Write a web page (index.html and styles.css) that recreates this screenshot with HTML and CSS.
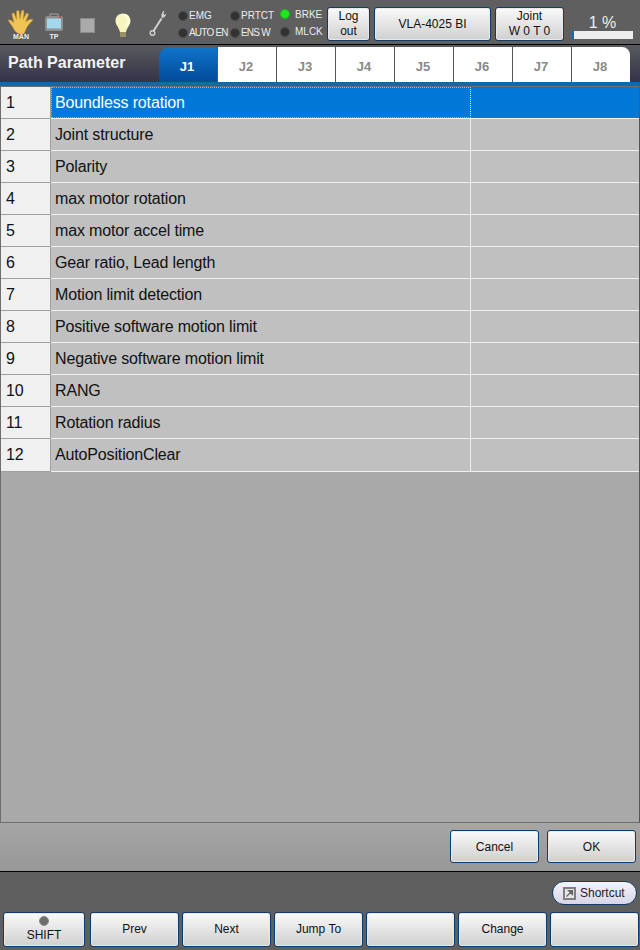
FILE: index.html
```html
<!DOCTYPE html>
<html lang="en">
<head>
    <meta charset="UTF-8">
    <meta name="viewport" content="width=device-width, initial-scale=1.0">
    <title>Path Parameter</title>
    <link rel="stylesheet" href="styles.css">
</head>
<body>

    <div class="screen">

        <!-- Status bar -->
        <div class="status-bar">
            <div class="icon-box icon-man">
                <svg width="28" height="25" viewBox="0 0 28 25">
                    <path d="M12 25 C8 23 7 20 5 17 C4 15 1 12 1.500 11 C3 10 6 13 7 14 L5 5.500 C5 3.500 7 3.500 7.500 5 L9.500 10.500 L9.500 3 C9.500 1 12 1 12.200 3 L13 10 L14.500 2 C15 0.500 17.300 1 17 3 L16 10.500 L19 5 C20 3.500 22 4.500 21.300 6 L18.500 13 C20 12 24 9 26 11 C24 13 21 16 19.500 19 C18.500 21 17.500 24 17 25 Z" fill="#f0c555" stroke="#c2922e" stroke-width="0.6"/>
                </svg>
                <span class="icon-label">MAN</span>
            </div>
            <div class="icon-box icon-tp">
                <svg width="20" height="19" viewBox="0 0 20 19">
                    <path d="M6 3 V1 H14 V3" fill="none" stroke="#8d8d8d" stroke-width="1.500"/>
                    <rect x="1" y="3" width="18" height="15" rx="2.500" fill="#8f8f8f"/>
                    <rect x="3" y="5.500" width="14" height="10" fill="#a3d8ec"/>
                    <rect x="15" y="3.500" width="2" height="1.500" fill="#c8393a"/>
                </svg>
                <span class="icon-label">TP</span>
            </div>
            <div class="icon-stop"></div>
            <div class="icon-bulb">
                <svg width="16" height="25" viewBox="0 0 16 25">
                    <path d="M8 0.500 C3.500 0.500 0.500 3.500 0.500 8 C0.500 12 4 14.500 5 19 H11 C12 14.500 15.500 12 15.500 8 C15.500 3.500 12.500 0.500 8 0.500 Z" fill="#f8f4c0"/>
                    <path d="M8 2 C11 2 13.500 4.500 13.500 8 C13.500 10 12 12 11 14" fill="none" stroke="#fffde8" stroke-width="2"/>
                    <rect x="5" y="19" width="6" height="5" fill="#9a9068"/>
                </svg>
            </div>
            <div class="icon-wrench">
                <svg width="18" height="27" viewBox="0 0 18 27">
                    <path d="M4.500 21 L12.500 8.500" fill="none" stroke="#d0d0d0" stroke-width="2"/>
                    <path d="M15.500 0.500 C13 1.500 12 4 12.500 8 C15 8 16.500 6.500 17.500 3.500 L15.500 5 L14.500 3.500 Z" fill="#d0d0d0"/>
                    <circle cx="3.500" cy="23" r="2.300" fill="none" stroke="#d0d0d0" stroke-width="1.400"/>
                </svg>
            </div>

            <div class="led-grid">
                <div class="led-item"><i class="led"></i>EMG</div>
                <div class="led-item"><i class="led"></i>PRTCT</div>
                <div class="led-item led-top"><i class="led led-on"></i>BRKE</div>
                <div class="led-item led-tight"><i class="led"></i>AUTO EN</div>
                <div class="led-item led-tight"><i class="led"></i>ENS W</div>
                <div class="led-item led-low"><i class="led"></i>MLCK</div>
            </div>

            <button class="btn btn-logout">Log<br>out</button>
            <button class="btn btn-model">VLA-4025 BI</button>
            <button class="btn btn-joint">Joint<br>W 0 T 0</button>

            <div class="speed">
                <div class="speed-text">1 %</div>
                <div class="speed-bar"><div class="speed-fill" style="width: 1%"></div></div>
            </div>
        </div>

        <!-- Title and tabs -->
        <div class="title-bar">
            <div class="title">Path Parameter</div>
            <div class="tabs">
                <div class="tab tab-active">J1</div>
                <div class="tab">J2</div>
                <div class="tab">J3</div>
                <div class="tab">J4</div>
                <div class="tab">J5</div>
                <div class="tab">J6</div>
                <div class="tab">J7</div>
                <div class="tab tab-last">J8</div>
            </div>
        </div>
        <div class="blue-strip"></div>

        <!-- Parameter list -->
        <div class="grid-panel">
            <div class="row row-selected">
                <div class="cell-num">1</div>
                <div class="cell-name">Boundless rotation</div>
                <div class="cell-value"></div>
            </div>
            <div class="row">
                <div class="cell-num">2</div>
                <div class="cell-name">Joint structure</div>
                <div class="cell-value"></div>
            </div>
            <div class="row">
                <div class="cell-num">3</div>
                <div class="cell-name">Polarity</div>
                <div class="cell-value"></div>
            </div>
            <div class="row">
                <div class="cell-num">4</div>
                <div class="cell-name">max motor rotation</div>
                <div class="cell-value"></div>
            </div>
            <div class="row">
                <div class="cell-num">5</div>
                <div class="cell-name">max motor accel time</div>
                <div class="cell-value"></div>
            </div>
            <div class="row">
                <div class="cell-num">6</div>
                <div class="cell-name">Gear ratio, Lead length</div>
                <div class="cell-value"></div>
            </div>
            <div class="row">
                <div class="cell-num">7</div>
                <div class="cell-name">Motion limit detection</div>
                <div class="cell-value"></div>
            </div>
            <div class="row">
                <div class="cell-num">8</div>
                <div class="cell-name">Positive software motion limit</div>
                <div class="cell-value"></div>
            </div>
            <div class="row">
                <div class="cell-num">9</div>
                <div class="cell-name">Negative software motion limit</div>
                <div class="cell-value"></div>
            </div>
            <div class="row">
                <div class="cell-num">10</div>
                <div class="cell-name">RANG</div>
                <div class="cell-value"></div>
            </div>
            <div class="row">
                <div class="cell-num">11</div>
                <div class="cell-name">Rotation radius</div>
                <div class="cell-value"></div>
            </div>
            <div class="row">
                <div class="cell-num">12</div>
                <div class="cell-name">AutoPositionClear</div>
                <div class="cell-value"></div>
            </div>
        </div>

        <!-- Dialog buttons -->
        <div class="dialog-bar">
            <button class="btn btn-dialog">Cancel</button>
            <button class="btn btn-dialog">OK</button>
        </div>

        <!-- Function keys -->
        <div class="bottom-bar">
            <div class="shortcut-row">
                <div class="shortcut">
                    <svg class="shortcut-icon" width="13" height="13" viewBox="0 0 13 13">
                        <rect x="1" y="1" width="11" height="11" fill="#e6e6e6" stroke="#7f7f7f" stroke-width="2"/>
                        <path d="M3.500 9.500 L8 5 M5.500 3.500 H9.500 V7.500 Z" stroke="#666" stroke-width="1.200" fill="#666"/>
                    </svg>
                    Shortcut
                </div>
            </div>
            <div class="fkeys">
                <button class="btn fkey fkey-shift"><i class="shift-led"></i>SHIFT</button>
                <button class="btn fkey">Prev</button>
                <button class="btn fkey">Next</button>
                <button class="btn fkey">Jump To</button>
                <button class="btn fkey"></button>
                <button class="btn fkey">Change</button>
                <button class="btn fkey"></button>
            </div>
        </div>

    </div>

</body>
</html>
```

FILE: styles.css
```css
* {
    box-sizing: border-box;
}

html, body {
    margin: 0;
    height: 100%;
}

body {
    font-family: "Liberation Sans", Arial, sans-serif;
    background-color: #5f5f5f;
}

.screen {
    width: 640px;
    height: 950px;
    display: flex;
    flex-direction: column;
    overflow: hidden;
}

/* Status bar */
.status-bar {
    height: 45px;
    flex: none;
    display: flex;
    align-items: flex-start;
    background-color: #5f5f5f;
    border-bottom: 1px solid #000;
}

.icon-box {
    display: flex;
    flex-direction: column;
    align-items: center;
}

.icon-man {
    width: 28px;
    margin: 9px 0 0 7px;
}

.icon-man svg {
    margin-bottom: -1px;
}

.icon-tp {
    width: 20px;
    margin: 13px 0 0 9px;
}

.icon-label {
    font-size: 7px;
    font-weight: bold;
    line-height: 8px;
    color: #f0f0f0;
}

.icon-tp .icon-label {
    margin-top: 1px;
}

.icon-stop {
    width: 15px;
    height: 15px;
    margin: 18px 0 0 16px;
    background-color: #aaa;
    border: 1px solid #8b8b8b;
}

.icon-bulb {
    margin: 13px 0 0 20px;
    height: 25px;
}

.icon-wrench {
    margin: 10px 0 0 18px;
    height: 27px;
}

.led-grid {
    width: 146px;
    margin: 7px 0 0 11px;
    display: grid;
    grid-template-columns: 52px 50px 44px;
    grid-auto-rows: 17px;
}

.led-item {
    display: flex;
    align-items: center;
    gap: 1px;
    font-size: 10px;
    color: #ececec;
    white-space: nowrap;
}

.led-tight {
    letter-spacing: -0.8px;
}

.led-top {
    margin-top: -3px;
    gap: 5px;
}

.led-low {
    margin-top: -2px;
    gap: 5px;
}

.led {
    width: 10px;
    height: 10px;
    flex: none;
    border-radius: 50%;
    background-color: #333;
    border: 1px solid #4a4a4a;
}

.led-on {
    background-color: #1fe61f;
    border-color: #0ec00e;
}

/* Buttons */
.btn {
    padding: 0;
    font-family: "Liberation Sans", Arial, sans-serif;
    font-size: 12px;
    line-height: 15px;
    color: #111;
    background: linear-gradient(#fafafa, #cfcfcf);
    border: 1px solid #0f3c68;
    border-radius: 3px;
    box-shadow: inset 0 0 0 1px #e8e8e8;
}

.btn-logout {
    width: 43px;
    height: 34px;
    margin: 7px 0 0 3px;
}

.btn-model {
    width: 117px;
    height: 34px;
    margin: 7px 0 0 4px;
}

.btn-joint {
    width: 69px;
    height: 34px;
    margin: 7px 0 0 4px;
}

.speed {
    width: 61px;
    margin: 14px 0 0 8px;
}

.speed-text {
    font-size: 16px;
    line-height: 17px;
    text-align: center;
    color: #eee;
}

.speed-bar {
    height: 8px;
    background-color: #eee;
}

.speed-fill {
    height: 100%;
    min-width: 2px;
    background-color: #0f6db8;
}

/* Title and tabs */
.title-bar {
    height: 37px;
    flex: none;
    display: flex;
    background: linear-gradient(#5a5a5e, #33334a);
    padding-top: 2px;
}

.title {
    width: 159px;
    padding: 7px 0 0 8px;
    font-size: 16px;
    font-weight: bold;
    color: #f4f4f4;
}

.tabs {
    display: flex;
}

.tab {
    width: 59px;
    display: flex;
    align-items: center;
    justify-content: center;
    padding: 3px 2px 0 0;
    font-size: 13px;
    font-weight: bold;
    color: #8a8a8a;
    background-color: #fff;
    border-left: 1px solid #555;
}

.tab-active {
    width: 58px;
    color: #fff;
    background: linear-gradient(#0f74c9, #024a9a);
    border-left: none;
    border-top-left-radius: 10px;
}

.tab-last {
    border-top-right-radius: 8px;
}

.blue-strip {
    height: 4px;
    flex: none;
    background-color: #0f69ab;
}

/* Parameter list */
.grid-panel {
    height: 737px;
    flex: none;
    background-color: #a9a9a9;
    border: 1px solid #6e6e6e;
    border-right-color: #555;
}

.row {
    height: 32px;
    display: flex;
    font-size: 16px;
    letter-spacing: -0.15px;
    color: #111;
    background-color: #c0c0c0;
    border-bottom: 1px solid #f0f0f0;
}

.row:last-child {
    height: 33px;
}

.cell-num {
    width: 50px;
    flex: none;
    display: flex;
    align-items: center;
    padding-left: 5px;
    background-color: #f0f0f0;
    border-right: 1px solid #a0a0a0;
    border-bottom: 1px solid #a0a0a0;
    margin-bottom: -1px;
}

.cell-name {
    width: 420px;
    flex: none;
    display: flex;
    align-items: center;
    padding-left: 4px;
    border-right: 1px solid #f0f0f0;
}

.cell-value {
    flex: 1;
}

.row-selected {
    color: #fff;
    background-color: #0078d7;
}

.row-selected .cell-num {
    color: #111;
}

.row-selected .cell-name {
    border: 1px dotted #f0a050;
    border-right-color: #f4f4f4;
    padding-left: 3px;
}

/* Dialog buttons */
.dialog-bar {
    height: 49px;
    flex: none;
    display: flex;
    justify-content: flex-end;
    align-items: flex-start;
    gap: 8px;
    padding: 7px 4px 0 0;
    background: linear-gradient(#a6a6a6, #979797);
    border-bottom: 1px solid #000;
}

.btn-dialog {
    width: 89px;
    height: 33px;
    padding-top: 1px;
}

/* Function keys */
.bottom-bar {
    flex: 1;
    background-color: #5f5f5f;
}

.shortcut-row {
    display: flex;
    justify-content: flex-end;
    padding: 9px 3px 0 0;
}

.shortcut {
    width: 85px;
    height: 24px;
    display: flex;
    align-items: center;
    gap: 4px;
    padding-left: 10px;
    font-size: 12px;
    font-weight: 500;
    color: #222;
    background: linear-gradient(#f4f4fa, #d8d4e6);
    border: 1px solid #0f3c68;
    border-radius: 12px;
}

.shortcut-icon {
    flex: none;
}

.fkeys {
    display: flex;
    gap: 3px;
    margin: 7px 0 0 3px;
}

.fkey {
    width: 89px;
    height: 35px;
    padding-bottom: 1px;
}

.fkey-shift {
    width: 82px;
    margin-right: 2px;
    display: flex;
    flex-direction: column;
    align-items: center;
    padding: 3px 0 0;
    line-height: 13px;
}

.shift-led {
    width: 10px;
    height: 10px;
    border-radius: 50%;
    background-color: #6e6e6e;
    border: 1px solid #8a8a8a;
    margin-bottom: 3px;
}
```
